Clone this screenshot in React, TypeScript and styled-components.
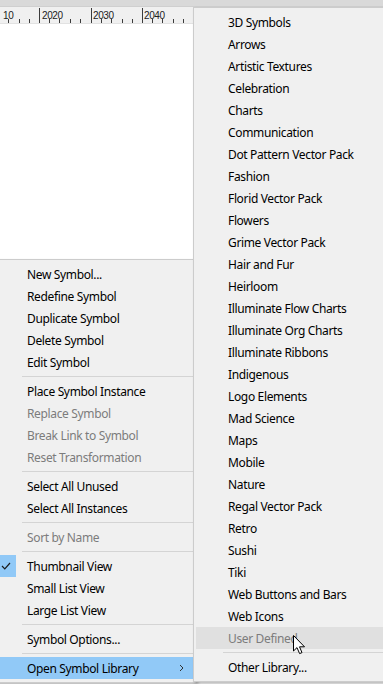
import React from "react";
import styled, { createGlobalStyle } from "styled-components";

type Entry =
  | { label: string; disabled?: boolean; checked?: boolean; active?: boolean; hover?: boolean; submenu?: boolean }
  | "sep";

const symbolMenu: Entry[] = [
  { label: "New Symbol..." },
  { label: "Redefine Symbol" },
  { label: "Duplicate Symbol" },
  { label: "Delete Symbol" },
  { label: "Edit Symbol" },
  "sep",
  { label: "Place Symbol Instance" },
  { label: "Replace Symbol", disabled: true },
  { label: "Break Link to Symbol", disabled: true },
  { label: "Reset Transformation", disabled: true },
  "sep",
  { label: "Select All Unused" },
  { label: "Select All Instances" },
  "sep",
  { label: "Sort by Name", disabled: true },
  "sep",
  { label: "Thumbnail View", checked: true },
  { label: "Small List View" },
  { label: "Large List View" },
  "sep",
  { label: "Symbol Options..." },
  "sep",
  { label: "Open Symbol Library", active: true, submenu: true },
];

const libraries = [
  "3D Symbols",
  "Arrows",
  "Artistic Textures",
  "Celebration",
  "Charts",
  "Communication",
  "Dot Pattern Vector Pack",
  "Fashion",
  "Florid Vector Pack",
  "Flowers",
  "Grime Vector Pack",
  "Hair and Fur",
  "Heirloom",
  "Illuminate Flow Charts",
  "Illuminate Org Charts",
  "Illuminate Ribbons",
  "Indigenous",
  "Logo Elements",
  "Mad Science",
  "Maps",
  "Mobile",
  "Nature",
  "Regal Vector Pack",
  "Retro",
  "Sushi",
  "Tiki",
  "Web Buttons and Bars",
  "Web Icons",
];

const libraryMenu: Entry[] = [
  ...libraries.map((label) => ({ label })),
  { label: "User Defined", disabled: true, hover: true },
  "sep",
  { label: "Other Library..." },
];

const Ruler = () => {
  const major = [-12, 39, 91, 142, 193, 244, 295, 346];
  const labels: [number, string][] = [
    [3, "10"],
    [42, "2020"],
    [93, "2030"],
    [144, "2040"],
  ];
  const minor: number[] = [];
  major.forEach((m) => {
    for (let i = 1; i < 5; i++) minor.push(m + i * 10.2);
  });
  return (
    <RulerBar>
      <svg width="383" height="16" viewBox="0 0 383 16">
        {major.map((x) => (
          <line key={"M" + x} x1={x + 0.5} y1="1" x2={x + 0.5} y2="16" stroke="#3c3c3c" />
        ))}
        {minor.map((x, i) => (
          <line key={"m" + i} x1={Math.round(x) + 0.5} y1="12" x2={Math.round(x) + 0.5} y2="16" stroke="#3c3c3c" />
        ))}
        {labels.map(([x, t]) => (
          <text key={t} x={x} y="11.5" fontSize="10" letterSpacing="-0.4" fill="#222" fontFamily="'Liberation Sans', Arial, sans-serif">
            {t}
          </text>
        ))}
      </svg>
    </RulerBar>
  );
};

const Menu = ({ entries, className }: { entries: Entry[]; className?: string }) => (
  <MenuPanel className={className}>
    {entries.map((e, i) =>
      e === "sep" ? (
        <Separator key={i} />
      ) : (
        <MenuItem key={i} $disabled={e.disabled} $active={e.active} $hover={e.hover}>
          <Gutter>
            {e.checked && (
              <CheckBox>
                <svg width="10" height="8" viewBox="0 0 10 8">
                  <path d="M1 4 L3.8 6.8 L9 1" fill="none" stroke="#1a1a1a" strokeWidth="1.2" />
                </svg>
              </CheckBox>
            )}
          </Gutter>
          <Label>{e.label}</Label>
          {e.submenu && (
            <Chevron>
              <svg width="5" height="8" viewBox="0 0 5 8">
                <path d="M1 1 L4 4 L1 7" fill="none" stroke="#333" strokeWidth="1" />
              </svg>
            </Chevron>
          )}
        </MenuItem>
      )
    )}
  </MenuPanel>
);

export default function App() {
  return (
    <>
      <GlobalStyle />
      <Screen>
        <Workspace>
          <TopStrip />
          <Ruler />
          <Canvas />
        </Workspace>
        <ContextMenu entries={symbolMenu} />
        <SubMenu entries={libraryMenu} />
        <Pointer width="13" height="20" viewBox="0 0 13 20">
          <path
            d="M0.5 0.5 L0.5 16 L4 12.6 L6.6 18.6 L9 17.6 L6.5 11.8 L11.5 11.8 Z"
            fill="#fff"
            stroke="#000"
            strokeWidth="1"
            strokeLinejoin="miter"
          />
        </Pointer>
      </Screen>
    </>
  );
}

const GlobalStyle = createGlobalStyle`
  html, body {
    margin: 0;
    padding: 0;
    background: #ffffff;
  }
  body {
    font-family: "Noto Sans", "Open Sans", sans-serif;
  }
`;

const Screen = styled.div`
  position: relative;
  width: 383px;
  height: 684px;
  overflow: hidden;
  background: #ffffff;
`;

const Workspace = styled.div`
  display: flex;
  flex-direction: column;
  height: 100%;
`;

const TopStrip = styled.div`
  height: 6px;
  background: #d9d9d9;
  border-bottom: 1px solid #cfcfcf;
`;

const RulerBar = styled.div`
  height: 16px;
  background: #f0f0f0;
  border-bottom: 1px solid #e2e2e2;
  line-height: 0;
`;

const Canvas = styled.div`
  flex: 1;
  background: #ffffff;
`;

const MenuPanel = styled.div`
  position: absolute;
  display: flex;
  flex-direction: column;
  background: #f0f0f0;
  border: 1px solid #cccccc;
  padding: 3px 2px;
  box-shadow: 2px 2px 3px rgba(0, 0, 0, 0.28);
  font-size: 12px;
  letter-spacing: -0.35px;
  color: #000;
`;

const ContextMenu = styled(Menu)`
  left: -8px;
  top: 259px;
  width: 198px;
`;

const SubMenu = styled(Menu)`
  left: 193px;
  top: 7px;
  width: 230px;
`;

const MenuItem = styled.div<{ $disabled?: boolean; $active?: boolean; $hover?: boolean }>`
  height: 22px;
  display: flex;
  align-items: center;
  white-space: nowrap;
  color: ${(p) => (p.$disabled ? "#7c7c7c" : "#000")};
  background: ${(p) => (p.$active ? "#91c9f7" : p.$hover ? "#e0e0e0" : "transparent")};
`;

const Gutter = styled.div`
  width: 32px;
  height: 22px;
  flex: none;
  display: flex;
`;

const CheckBox = styled.div`
  width: 21px;
  height: 22px;
  background: #91c9f7;
  display: flex;
  align-items: center;
  justify-content: center;
`;

const Label = styled.span`
  line-height: 22px;
  padding-top: 2px;
`;

const Chevron = styled.span`
  margin-left: auto;
  margin-right: 9px;
  display: flex;
`;

const Separator = styled.div`
  height: 7px;
  display: flex;
  align-items: center;
  &::after {
    content: "";
    flex: 1;
    height: 1px;
    margin-left: 27px;
    background: #d4d4d4;
  }
`;

const Pointer = styled.svg`
  position: absolute;
  left: 293px;
  top: 635px;
`;
